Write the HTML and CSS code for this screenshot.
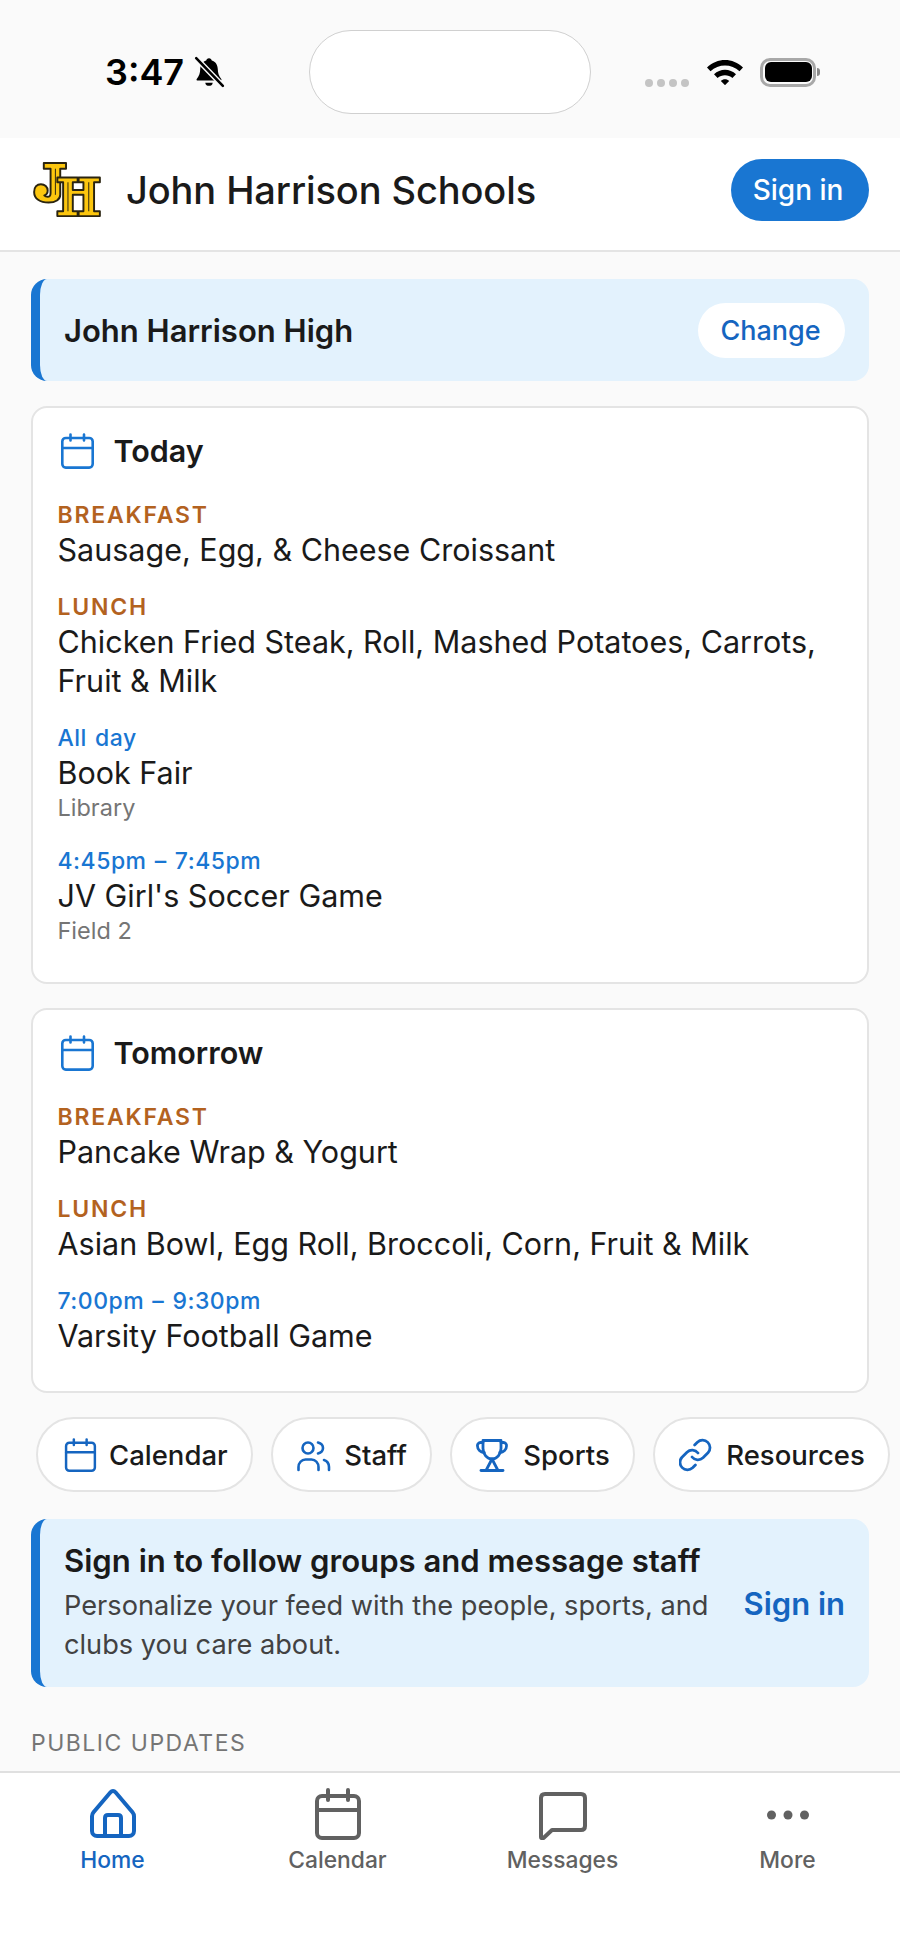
FILE: index.html
```html
<!DOCTYPE html>
<html lang="en">
<head>
  <meta charset="UTF-8">
  <title>John Harrison Schools</title>
  <link rel="stylesheet" href="styles.css">
</head>
<body>

<div class="app">
  <div class="status-bar">
    <div class="status-left">
      <span class="clock">3:47</span>
      <svg class="bell" viewBox="0 0 30 30" width="32" height="32">
        <path d="M15 2c1.500 0 2.400 1 2.600 2.300 3.600 1 5.400 4 5.600 7.700.2 4 .8 6.500 3.300 9.500.5.700.1 1.500-.8 1.500H4.300c-.9 0-1.300-.8-.8-1.500 2.500-3 3.100-5.500 3.300-9.500.2-3.700 2-6.700 5.600-7.700C12.600 3 13.500 2 15 2z" fill="#000"/>
        <path d="M11.500 25h7c-.3 2-1.700 3-3.500 3s-3.200-1-3.500-3z" fill="#000"/>
        <path d="M2 1l26 27" stroke="#fafafa" stroke-width="5"/>
        <path d="M3 2l25 26" stroke="#000" stroke-width="2.400" stroke-linecap="round"/>
      </svg>
    </div>
    <div class="island"></div>
    <div class="status-right">
      <div class="signal"><i></i><i></i><i></i><i></i></div>
      <svg class="wifi" viewBox="0 0 38 28" width="38" height="28">
        <path d="M1 10.500C11 .5 27 .5 37 10.500l-3.500 3.700C25.500 6.500 12.500 6.500 4.500 14.200z" fill="#000"/>
        <path d="M8 17.300c6-6 16-6 22 0l-3.600 3.700c-4-3.800-10.800-3.800-14.800 0z" fill="#000"/>
        <path d="M14.800 24c2.300-2.200 6.100-2.200 8.400 0L19 28.200z" fill="#000"/>
      </svg>
      <div class="battery"><div class="battery-fill"></div></div>
      <div class="battery-tip"></div>
    </div>
  </div>

  <header class="top-bar">
    <div class="brand">
      <svg class="logo" viewBox="0 0 70 60" width="68" height="58">
        <g fill="#fcc60e" stroke="#2a2410" stroke-width="2" stroke-linejoin="round">
          <path d="M11 2h23v6h-6v27c0 5-5 8-12 8C7 43 1 39 1 32c0-5 3-8 7-8s7 3 7 6.500c0 2.500-1.500 4.500-3.500 5 .8 1 2 1.500 3.500 1.500 2 0 3-1.500 3-4V8h-7z"/>
          <path d="M25 17h21v5h-5v8h11v-8h-5v-5h22v5h-6v30h6v5H47v-5h5V35H41v17h5v5H25v-5h6V22h-6z"/>
        </g>
        <path d="M23 8v27M36 22v30M57.500 22v30" stroke="#2a2410" stroke-width="1" fill="none"/>
      </svg>
      <span class="school-name">John Harrison Schools</span>
    </div>
    <button class="btn-signin">Sign in</button>
  </header>

  <main class="content">
    <section class="school-row">
      <span class="school-title">John Harrison High</span>
      <button class="btn-change">Change</button>
    </section>

    <section class="card">
      <div class="card-head">
        <svg class="icon" viewBox="0 0 38 36" width="38" height="36"><use href="#cal"/></svg>
        <h2>Today</h2>
      </div>
      <div class="item">
        <div class="meal">BREAKFAST</div>
        <div class="name">Sausage, Egg, &amp; Cheese Croissant</div>
      </div>
      <div class="item">
        <div class="meal">LUNCH</div>
        <div class="name">Chicken Fried Steak, Roll, Mashed Potatoes, Carrots, Fruit &amp; Milk</div>
      </div>
      <div class="item">
        <div class="when">All day</div>
        <div class="name">Book Fair</div>
        <div class="place">Library</div>
      </div>
      <div class="item">
        <div class="when">4:45pm – 7:45pm</div>
        <div class="name">JV Girl's Soccer Game</div>
        <div class="place">Field 2</div>
      </div>
    </section>

    <section class="card">
      <div class="card-head">
        <svg class="icon" viewBox="0 0 38 36" width="38" height="36"><use href="#cal"/></svg>
        <h2>Tomorrow</h2>
      </div>
      <div class="item">
        <div class="meal">BREAKFAST</div>
        <div class="name">Pancake Wrap &amp; Yogurt</div>
      </div>
      <div class="item">
        <div class="meal">LUNCH</div>
        <div class="name">Asian Bowl, Egg Roll, Broccoli, Corn, Fruit &amp; Milk</div>
      </div>
      <div class="item">
        <div class="when">7:00pm – 9:30pm</div>
        <div class="name">Varsity Football Game</div>
      </div>
    </section>

    <nav class="chips">
      <a class="chip">
        <svg class="icon" viewBox="0 0 38 36" width="36" height="36"><use href="#cal"/></svg>
        Calendar
      </a>
      <a class="chip">
        <svg class="icon" viewBox="0 0 36 36" width="36" height="36">
          <g fill="none" stroke="currentColor" stroke-width="2.600" stroke-linecap="round" stroke-linejoin="round">
            <circle cx="11" cy="11" r="5.500"/>
            <path d="M1.500 33v-3c0-4 3-7.500 7-7.500h6c4 0 7 3.500 7 7.500v3"/>
            <path d="M21 5.500c3 .8 5 3 5 5.500s-2 4.700-5 5.500"/>
            <path d="M27 23c3 1 5 4 5 7v3"/>
          </g>
        </svg>
        Staff
      </a>
      <a class="chip">
        <svg class="icon" viewBox="0 0 36 36" width="36" height="36">
          <g fill="none" stroke="currentColor" stroke-width="2.800" stroke-linecap="round" stroke-linejoin="round">
            <path d="M7 3.500h18v8c0 5.500-4 10.500-9 10.500S7 17 7 11.500z"/>
            <path d="M7 5.500H4.500a3 3 0 0 0-3 3.500c0 3.500 2.800 6 6.800 6.500"/>
            <path d="M25 5.500h2.500a3 3 0 0 1 3 3.500c0 3.500-2.800 6-6.800 6.500"/>
            <path d="M16 22l-6 11.500M16 22l6 11.500"/>
            <path d="M5 33.500h22"/>
          </g>
        </svg>
        Sports
      </a>
      <a class="chip">
        <svg class="icon" viewBox="2 0 36 36" width="36" height="36">
          <g fill="none" stroke="currentColor" stroke-width="2.800" stroke-linecap="round" stroke-linejoin="round">
            <path d="M15 20a7.500 7.500 0 0 0 11 .8l5-5a7.500 7.500 0 0 0-10.600-10.600l-2.800 2.800"/>
            <path d="M21 16a7.500 7.500 0 0 0-11-.8l-5 5a7.500 7.500 0 0 0 10.600 10.600l2.800-2.800"/>
          </g>
        </svg>
        Resources
      </a>
    </nav>

    <section class="promo">
      <div class="promo-text">
        <h3>Sign in to follow groups and message staff</h3>
        <p>Personalize your feed with the people, sports, and clubs you care about.</p>
      </div>
      <a class="promo-link">Sign in</a>
    </section>

    <div class="section-label">PUBLIC UPDATES</div>
  </main>

  <footer class="tabs">
    <a class="tab active">
      <svg viewBox="0 0 50 52" width="50" height="52">
        <g fill="none" stroke="currentColor" stroke-width="4" stroke-linejoin="round">
          <path d="M25 3c1 0 1.800.4 2.500 1.200l17 20c1 1.200 1.500 2.500 1.500 4V43c0 2.800-2.200 5-5 5H9c-2.800 0-5-2.200-5-5V28.200c0-1.500.5-2.800 1.500-4l17-20C23.200 3.400 24 3 25 3z"/>
          <path d="M17 48V30c0-2 1.200-3 3-3h10c1.800 0 3 1 3 3v18"/>
        </g>
      </svg>
      <span>Home</span>
    </a>
    <a class="tab">
      <svg viewBox="0 0 50 52" width="50" height="52">
        <g fill="none" stroke="currentColor" stroke-width="4" stroke-linecap="round" stroke-linejoin="round">
          <rect x="4" y="8" width="42" height="42" rx="5"/>
          <path d="M4 22h42M15 2v10M35 2v10"/>
        </g>
      </svg>
      <span>Calendar</span>
    </a>
    <a class="tab">
      <svg viewBox="0 0 50 52" width="50" height="52">
        <path d="M3 10c0-2.500 1.500-4 4-4h36c2.500 0 4 1.500 4 4v28c0 2.500-1.500 4-4 4H14L5.500 50c-.8.700-2.500.300-2.500-.8z" fill="none" stroke="currentColor" stroke-width="4" stroke-linejoin="round"/>
      </svg>
      <span>Messages</span>
    </a>
    <a class="tab">
      <svg viewBox="0 0 50 52" width="50" height="52">
        <circle cx="8.500" cy="27" r="4.500" fill="currentColor"/>
        <circle cx="25" cy="27" r="4.500" fill="currentColor"/>
        <circle cx="41.500" cy="27" r="4.500" fill="currentColor"/>
      </svg>
      <span>More</span>
    </a>
  </footer>
</div>

<svg class="defs" width="0" height="0">
  <symbol id="cal" viewBox="0 0 38 36">
    <g fill="none" stroke="currentColor" stroke-width="2.600" stroke-linecap="round" stroke-linejoin="round">
      <rect x="4.300" y="5" width="30.400" height="29.600" rx="3.500"/>
      <path d="M4.300 15h30.400M12.500 1.500v6M26 1.500v6"/>
    </g>
  </symbol>
</svg>

</body>
</html>
```

FILE: styles.css
```css
* {
  box-sizing: border-box;
}
html, body {
  margin: 0;
  padding: 0;
}
body {
  font-family: Inter, "Liberation Sans", sans-serif;
  background: #fafafa;
  color: #1a1a1a;
}
button {
  font-family: inherit;
  border: none;
}
.defs {
  position: absolute;
}
.app {
  width: 900px;
  height: 1957px;
  overflow: hidden;
  display: flex;
  flex-direction: column;
}

/* status bar */
.status-bar {
  height: 138px;
  flex: none;
  display: flex;
  align-items: flex-start;
  padding-top: 30px;
  background: #fafafa;
}
.status-left {
  width: 309px;
  height: 84px;
  display: flex;
  align-items: center;
  padding-left: 105px;
}
.clock {
  font-size: 36px;
  font-weight: 600;
  color: #000;
}
.bell {
  margin-left: 9px;
}
.island {
  width: 282px;
  height: 84px;
  background: #fff;
  border: 1px solid #d0d0d0;
  border-radius: 42px;
}
.status-right {
  flex: 1;
  height: 84px;
  display: flex;
  align-items: center;
  padding-left: 54px;
}
.signal {
  display: flex;
  gap: 4px;
  margin-top: 21px;
}
.signal i {
  width: 8px;
  height: 8px;
  border-radius: 50%;
  background: #c4c4c4;
}
.wifi {
  margin-left: 17px;
  margin-top: -2px;
}
.battery {
  width: 56px;
  height: 29px;
  margin-left: 16px;
  padding: 1.500px;
  border: 3px solid #a8a8a8;
  border-radius: 10px;
}
.battery-fill {
  height: 100%;
  background: #000;
  border-radius: 6px;
}
.battery-tip {
  width: 3px;
  height: 8px;
  margin-left: 1px;
  background: #8a8a8a;
  border-radius: 0 4px 4px 0;
}

/* header */
.top-bar {
  height: 114px;
  flex: none;
  display: flex;
  align-items: center;
  justify-content: space-between;
  padding: 0 31px 8px 33px;
  background: #fff;
  border-bottom: 2px solid #e4e4e4;
}
.brand {
  display: flex;
  align-items: center;
  gap: 25px;
}
.school-name {
  font-size: 38px;
  font-weight: 500;
  letter-spacing: -0.1px;
}
.btn-signin {
  width: 138px;
  height: 62px;
  border-radius: 31px;
  background: #1976d2;
  color: #fff;
  font-size: 28px;
  font-weight: 500;
  padding: 0 4px 0 0;
}

.content {
  flex: 1;
  padding: 27px 31px 0;
  min-height: 0;
}

.school-row {
  height: 102px;
  display: flex;
  align-items: center;
  justify-content: space-between;
  padding: 0 24px;
  background: #e3f2fd;
  border-left: 9px solid #1976d2;
  border-radius: 16px;
}
.school-title {
  font-size: 31px;
  font-weight: 600;
}
.btn-change {
  width: 147px;
  height: 55px;
  border-radius: 28px;
  background: #fff;
  color: #1565c0;
  font-size: 27px;
  font-weight: 500;
  padding: 0 2px 0 0;
}

.card {
  margin-top: 24px;
  padding: 24px 24px 36px 24.500px;
  background: #fff;
  border: 2px solid #e4e4e4;
  border-radius: 16px;
}
.school-row + .card {
  margin-top: 25px;
}
.card-head {
  display: flex;
  align-items: center;
  gap: 18px;
  margin-bottom: 32px;
}
.card-head h2 {
  margin: 0;
  font-size: 30.500px;
  font-weight: 600;
}
.icon {
  color: #1976d2;
  flex: none;
}
.item {
  margin-bottom: 24px;
}
.item:last-child {
  margin-bottom: 0;
}
.meal {
  font-size: 23px;
  line-height: 29px;
  font-weight: 600;
  letter-spacing: 1.800px;
  color: #b3621f;
}
.when {
  font-size: 23px;
  line-height: 29px;
  font-weight: 500;
  letter-spacing: 0.500px;
  word-spacing: 1.500px;
  color: #1976d2;
}
.name {
  font-size: 30.500px;
  line-height: 39px;
}
.place {
  font-size: 23.500px;
  line-height: 31px;
  color: #757575;
}

.chips {
  display: flex;
  gap: 18px;
  margin: 24px 0 0 5px;
  width: 900px;
}
.chip {
  flex: none;
  height: 75px;
  display: flex;
  align-items: center;
  gap: 11px;
  padding: 0 23.500px 0 24px;
  background: #fff;
  border: 2px solid #e4e4e4;
  border-radius: 38px;
  font-size: 27.500px;
  font-weight: 500;
}
.chip .icon {
  color: #1565c0;
}

.promo {
  height: 168px;
  margin-top: 27px;
  display: flex;
  align-items: center;
  justify-content: space-between;
  padding: 0 24px;
  background: #e3f2fd;
  border-left: 9px solid #1976d2;
  border-radius: 16px;
}
.promo-text {
  width: 655px;
}
.promo h3 {
  margin: 0 0 6px;
  font-size: 31.100px;
  line-height: 38px;
  font-weight: 600;
}
.promo p {
  margin: 0;
  font-size: 27.200px;
  line-height: 39px;
  color: #424242;
}
.promo-link {
  font-size: 31px;
  font-weight: 600;
  color: #1565c0;
}

.section-label {
  margin-top: 42px;
  font-size: 23px;
  line-height: 28px;
  letter-spacing: 1.500px;
  color: #757575;
}

/* bottom tabs */
.tabs {
  height: 186px;
  flex: none;
  display: grid;
  grid-template-columns: repeat(4, 225px);
  background: #fff;
  border-top: 2px solid #e0e0e0;
}
.tab {
  display: flex;
  flex-direction: column;
  align-items: center;
  padding-top: 15px;
  color: #616161;
}
.tab span {
  margin-top: 6px;
  font-size: 22.800px;
  font-weight: 500;
}
.tab.active {
  color: #1565c0;
}
```
